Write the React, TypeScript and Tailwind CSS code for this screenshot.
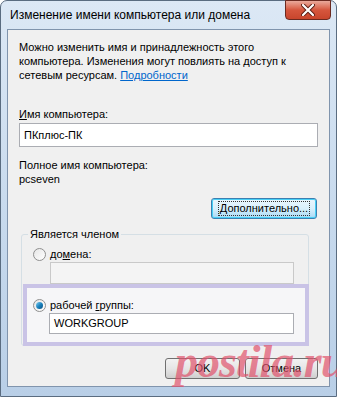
import React from "react";

const font = { fontFamily: '"Liberation Sans", Arial, sans-serif' };

function Radio({ checked }: { checked?: boolean }) {
  return (
    <span className="relative inline-flex w-[13px] h-[13px] rounded-full border border-[#8f8f8f] bg-gradient-to-br from-[#e6e6e6] to-[#ffffff] items-center justify-center shrink-0">
      {checked && (
        <span className="w-[7px] h-[7px] rounded-full bg-gradient-to-br from-[#7ad0f0] via-[#1a84c0] to-[#0b4f80]" />
      )}
    </span>
  );
}

export default function App() {
  return (
    <div className="w-[337px] h-[397px] overflow-hidden bg-white" style={font}>
      <div className="relative w-[337px] h-[397px] rounded-t-[7px] border border-[#5a6c80] bg-gradient-to-b from-[#dce8f5] via-[#c9dbee] to-[#b9cfe7] flex flex-col">
        {/* Title bar */}
        <div className="h-[28px] flex items-center pl-[9px] text-[12px] text-black shrink-0">
          Изменение имени компьютера или домена
        </div>
        {/* Close button */}
        <div className="absolute top-[-1px] right-[5px] w-[46px] h-[20px] rounded-b-[4px] border border-[#6b2a20] bg-gradient-to-b from-[#e9a99b] via-[#d5563d] to-[#c8452c] flex items-center justify-center">
          <svg width="14" height="12" viewBox="0 0 14 12">
            <path d="M2 1 L12 11 M12 1 L2 11" stroke="#5a1d14" strokeWidth="4" strokeLinecap="round" />
            <path d="M2 1 L12 11 M12 1 L2 11" stroke="#ffffff" strokeWidth="2.2" strokeLinecap="round" />
          </svg>
        </div>

        {/* Client area */}
        <div className="flex-1 mx-[6px] mb-[9px] border border-[#8094ad] bg-[#f0f0f0] flex flex-col px-[11px] pt-[10px] text-[11px] text-black">
          <p className="leading-[14px]">
            Можно изменить имя и принадлежность этого
            <br />
            компьютера. Изменения могут повлиять на доступ к
            <br />
            сетевым ресурсам. <span className="text-[#0066cc] underline">Подробности</span>
          </p>

          <div className="mt-[25px] leading-[14px]">
            <span className="underline">И</span>мя компьютера:
          </div>
          <div className="mt-[2px] h-[24px] border border-[#abadb3] bg-white flex items-center px-[4px]">
            ПКплюс-ПК
          </div>

          <div className="mt-[11px] leading-[14px]">Полное имя компьютера:</div>
          <div className="leading-[14px]">pcseven</div>

          <div className="mt-[12px] flex justify-end pr-[1px]">
            <div className="w-[106px] h-[21px] rounded-[3px] border border-[#3c7fb1] shadow-[inset_0_0_0_1px_#48d0f6] bg-gradient-to-b from-[#eaf6fd] via-[#d9f0fc] to-[#a7d9f5] flex items-center justify-center">
              <span className="outline outline-1 outline-dotted outline-[#333] px-[1px] leading-[13px]">
                <span className="underline">Д</span>ополнительно...
              </span>
            </div>
          </div>

          {/* Group box */}
          <div className="relative mt-[15px] ml-[2px] mr-[9px] border border-[#d5dfe5] rounded-[3px] h-[112px]">
            <div className="absolute top-[-8px] left-[6px] px-[2px] bg-[#f0f0f0] leading-[14px]">
              Является членом
            </div>
            <div className="pt-[12px] pl-[11px] flex items-center gap-[4px] leading-[14px]">
              <Radio />
              <span>
                до<span className="underline">м</span>ена:
              </span>
            </div>
            <div className="mt-[1px] ml-[28px] mr-[14px] h-[22px] border border-[#c9c9c9] bg-[#f4f4f4]" />

            <div className="ml-[1px] mr-[-1px] h-[62px] border-[4px] border-[#c9c3e6] bg-[#f6f6f8] flex flex-col">
              <div className="pt-[10px] pl-[6px] flex items-center gap-[4px] leading-[14px]">
                <Radio checked />
                <span>
                  рабочей <span className="underline">г</span>руппы:
                </span>
              </div>
              <div className="mt-[1px] ml-[22px] mr-[11px] h-[21px] border border-[#abadb3] bg-white flex items-center px-[4px]">
                WORKGROUP
              </div>
            </div>
          </div>

          {/* Buttons */}
          <div className="mt-[12px] flex justify-end gap-[5px]">
            <div className="w-[75px] h-[21px] rounded-[3px] border border-[#707070] bg-gradient-to-b from-[#f2f2f2] via-[#e6e6e6] to-[#cfcfcf] flex items-center justify-center">
              OK
            </div>
            <div className="w-[73px] h-[21px] rounded-[3px] border border-[#707070] bg-gradient-to-b from-[#f2f2f2] via-[#e6e6e6] to-[#cfcfcf] flex items-center justify-center">
              Отмена
            </div>
          </div>
        </div>

        {/* Watermark */}
        <div
          className="absolute left-[174px] top-[338px] text-[46px] font-bold italic leading-none text-[#e0506a]/70 tracking-[-1px]"
          style={{ fontFamily: '"Liberation Serif", "Times New Roman", serif' }}
        >
          postila.ru
        </div>
      </div>
    </div>
  );
}
